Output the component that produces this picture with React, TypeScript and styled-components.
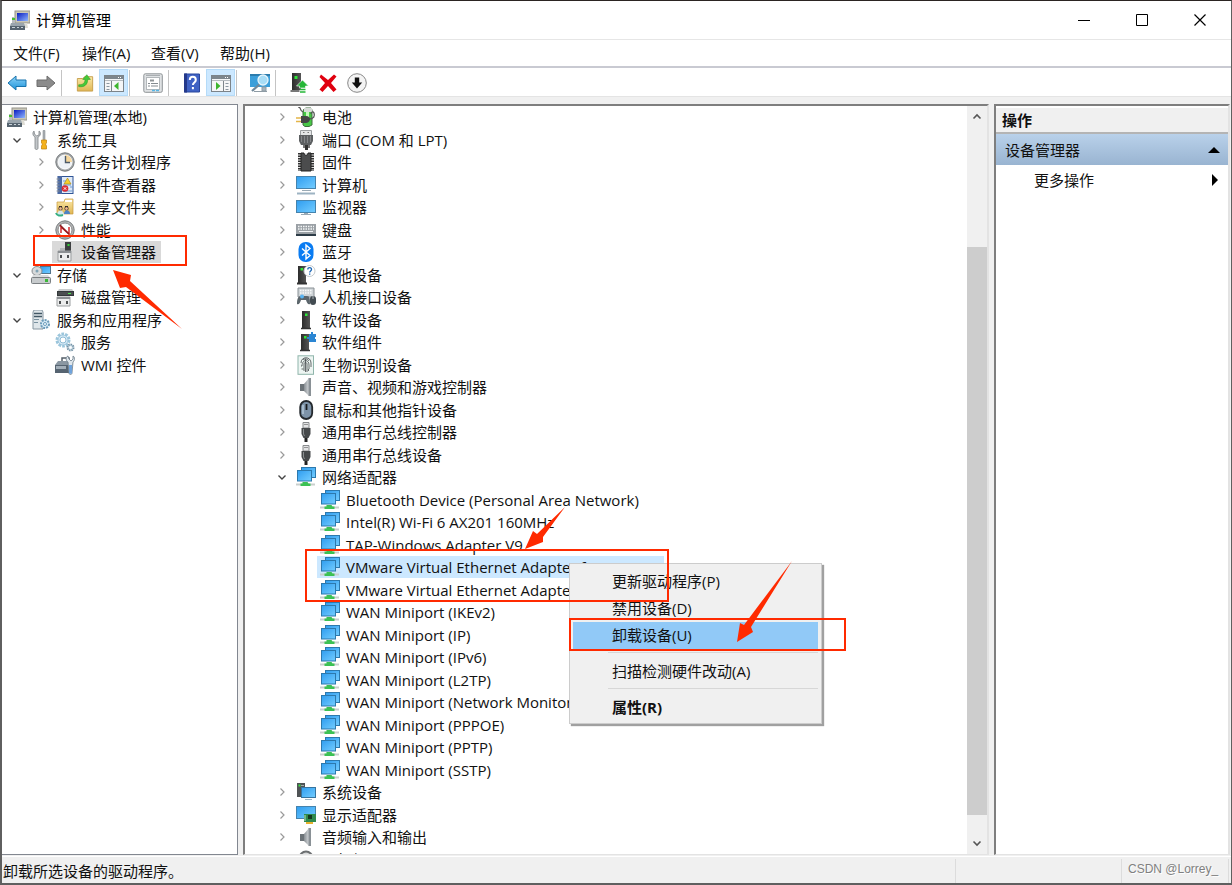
import React from 'react';
import styled, { createGlobalStyle, css } from 'styled-components';

const GlobalStyle = createGlobalStyle`
  * { box-sizing: border-box; }
  body {
    margin: 0;
    background: #f0f0f0;
    color: #111;
    font-family: "Open Sans", "Noto Sans CJK SC", sans-serif;
    font-size: 15px;
    line-height: 22px;
  }
  ul { list-style: none; margin: 0; padding: 0; }
  button { font: inherit; color: inherit; background: none; border: 0; padding: 0; margin: 0; }
  svg { display: block; flex: none; }
`;

/* ---------- icons ---------- */

const Defs = styled.svg`
  position: absolute;
`;

function Gradients() {
  return (
    <Defs width="0" height="0" aria-hidden="true">
      <linearGradient id="screen" x1="0" y1="0" x2="1" y2="1">
        <stop offset="0" stopColor="#2f9df0" />
        <stop offset="1" stopColor="#74cdff" />
      </linearGradient>
      <linearGradient id="steel" x1="0" y1="0" x2="1" y2="0">
        <stop offset="0" stopColor="#868c91" />
        <stop offset="1" stopColor="#d5d9dc" />
      </linearGradient>
      <linearGradient id="navy" x1="0" y1="0" x2="1" y2="1">
        <stop offset="0" stopColor="#0a1cc0" />
        <stop offset="1" stopColor="#8fb6ff" />
      </linearGradient>
      <linearGradient id="tower" x1="0" y1="0" x2="1" y2="0">
        <stop offset="0" stopColor="#2c2c2c" />
        <stop offset="1" stopColor="#555" />
      </linearGradient>
      <linearGradient id="folder" x1="0" y1="0" x2="0" y2="1">
        <stop offset="0" stopColor="#fbe9a8" />
        <stop offset="1" stopColor="#e0b653" />
      </linearGradient>
      <linearGradient id="sky" x1="0" y1="0" x2="0" y2="1">
        <stop offset="0" stopColor="#8fd4f8" />
        <stop offset="1" stopColor="#1c93da" />
      </linearGradient>
    </Defs>
  );
}

const shapes: Record<string, React.ReactNode> = {
  management: (
    <>
      <rect x="5" y="1" width="15" height="12" fill="#c9c7b8" stroke="#96948a" />
      <rect x="7" y="3" width="11" height="8" fill="url(#navy)" />
      <path d="M2 7h3v6H2z" fill="#b9bcc0" />
      <rect x="2" y="8" width="3" height="2" fill="#46c02e" />
      <path d="M8 13h9l1 5H8z" fill="#dddcd4" />
      <path d="M1 13h13l1 3H0z" fill="#9aa5ad" />
      <rect x="0" y="16" width="15" height="4" fill="#566470" />
      <path d="M2 17.500h3m2 0h2m2 0h2" stroke="#c9d2d8" />
    </>
  ),
  tools: (
    <>
      <path d="M3 1C1 3 2 6 4 7v11c0 2 3 2 3 0V7c3-1 3-5 1-6v4L5.500 6 3.500 4z" fill="#c3c7ca" stroke="#7d8387" strokeWidth=".8" />
      <path d="M12 0.500h2v10h-2z" fill="#aeb3b7" stroke="#777c80" strokeWidth=".5" />
      <path d="M10.500 10h5v3l-1 1 1 2v3h-5v-3l1-2-1-1z" fill="#f5b21c" stroke="#bd7f0c" strokeWidth=".7" />
    </>
  ),
  clock: (
    <>
      <circle cx="10" cy="10" r="9.200" fill="#a5a9ab" stroke="#74787a" />
      <circle cx="10" cy="10" r="7" fill="#eef2f6" stroke="#fff" />
      <path d="M10 10V3a7 7 0 0 1 7 7z" fill="#f6d79c" />
      <path d="M10.500 4v6.500H15" stroke="#4c5a68" strokeWidth="1.400" fill="none" />
    </>
  ),
  events: (
    <>
      <rect x="3" y="1.500" width="15" height="17" fill="#dfeaf7" stroke="#2f5597" />
      <rect x="3" y="1" width="4" height="18" fill="#4a69a3" />
      <path d="M1.500 4h3m-3 3h3m-3 3h3m-3 3h3m-3 3h3" stroke="#8a8f96" />
      <path d="M8 6h3m-3 4h8M8 16h9M15 12h3" stroke="#6e9ad4" />
      <path d="M12.500 3l3.500 6H9z" fill="#f6cf2d" stroke="#a98513" strokeWidth=".6" />
      <circle cx="10" cy="13.500" r="3.300" fill="#dc2b32" />
      <path d="M8.800 12.300l2.400 2.400m0-2.400l-2.400 2.400" stroke="#fff" />
    </>
  ),
  shared: (
    <>
      <path d="M2 5h7l1-3h8v15H2z" fill="url(#folder)" stroke="#c79a3c" strokeWidth=".7" />
      <path d="M10 3h7v2h-7z" fill="#fff" />
      <path d="M4 9h3v2H4zm6 0h3v2h-3z" fill="#2f2a28" />
      <circle cx="5.500" cy="11.500" r="1.800" fill="#f0b98e" stroke="#2f2a28" strokeWidth=".7" />
      <circle cx="11.500" cy="11.500" r="1.800" fill="#f0b98e" stroke="#2f2a28" strokeWidth=".7" />
      <path d="M2 18c0-6 7-6 7 0z" fill="#d5e9ee" />
      <path d="M9 17c0-5 6-5 6 0z" fill="#4e83c4" />
      <path d="M1 16c1 3 4 3 7 2" stroke="#35b084" strokeWidth="2" fill="none" />
    </>
  ),
  perf: (
    <>
      <circle cx="10" cy="10" r="9.200" fill="#b3b5b6" stroke="#74787a" />
      <circle cx="10" cy="10" r="7" fill="#fff" stroke="#8a8a8a" />
      <path d="M6 13V7l8 7V7" stroke="#d3272b" strokeWidth="1.500" fill="none" />
      <path d="M5 5l9 9" stroke="#8c1c1f" strokeWidth="1.500" />
    </>
  ),
  devmgr: (
    <>
      <rect x="10" y="0" width="6" height="9" fill="#3d3f40" />
      <rect x="12.500" y="2" width="2" height="2" fill="#37d63a" />
      <path d="M5 6h5v3H5z" fill="#b5b8ba" />
      <path d="M3 9h13v10H3z" fill="#eceded" stroke="#9c9fa1" />
      <path d="M3 9h13v2H3z" fill="#8c9093" />
      <path d="M5 13h2v3H5zm7 0h2v3h-2z" fill="#4c4f51" />
    </>
  ),
  storage: (
    <>
      <rect x="9.500" y="1.500" width="10" height="7" fill="url(#screen)" stroke="#52748c" />
      <ellipse cx="6" cy="6" rx="5" ry="4.500" fill="#d7dadb" stroke="#878c8f" />
      <circle cx="6" cy="6" r="1.500" fill="#7fa3b5" />
      <path d="M2 10h15l3 4H0z" fill="#d9dcdd" />
      <rect x=".5" y="12.500" width="19" height="6" rx="1" fill="#c7cbcd" stroke="#7b8083" />
      <rect x="14" y="14" width="3" height="3" fill="#3bb738" />
    </>
  ),
  diskmgr: (
    <>
      <path d="M4 2h13l2 3H2z" fill="#c9cccd" />
      <rect x="2.500" y="4.500" width="16" height="4" fill="#4b4e50" stroke="#33383a" />
      <rect x="13" y="6" width="3" height="1" fill="#4bea4b" />
      <path d="M2 10h13v9H2z" fill="#eceded" stroke="#9c9fa1" />
      <path d="M2 10h13v2H2z" fill="#8c9093" />
      <path d="M4 14h2v3H4zm7 0h2v3h-2z" fill="#4c4f51" />
    </>
  ),
  server: (
    <>
      <path d="M3 0h8l1 2v17H2V2z" fill="#dfe6ea" stroke="#8796a1" />
      <path d="M3 3.500h8M3 6.500h8" stroke="#425765" strokeWidth="1.500" />
      <path d="M3 9.500h5m-5 3h4" stroke="#78909e" />
      <circle cx="14" cy="14" r="4" fill="#d8ecf8" stroke="#6c9cba" strokeWidth="2" strokeDasharray="2 1" />
      <circle cx="14" cy="14" r="1.500" fill="#fff" stroke="#6c9cba" />
    </>
  ),
  gears: (
    <>
      <circle cx="8" cy="8" r="5.500" fill="#e4f1f8" stroke="#9cc6dc" strokeWidth="4" strokeDasharray="2.400 1" />
      <circle cx="8" cy="8" r="5" fill="#d6eaf6" stroke="#8fbcd5" strokeWidth=".7" />
      <circle cx="8" cy="8" r="3" fill="#fff" stroke="#8fbcd5" />
      <circle cx="15.500" cy="15.500" r="3" fill="#cfe0ea" stroke="#7895a8" strokeWidth="2" strokeDasharray="1.500 .8" />
      <circle cx="15.500" cy="15.500" r="1.200" fill="#fff" />
    </>
  ),
  wmi: (
    <>
      <path d="M7 6V3h7v3" stroke="#55606a" strokeWidth="1.500" fill="none" />
      <path d="M3 6h14l1 4H0z" fill="#8a97a2" />
      <path d="M0 10h17v8H0z" fill="#566471" />
      <path d="M1 11h10v3H1z" fill="#a3afb9" />
      <path d="M13 1c-3 1-2 5 0 6l1 11c0 2 3 2 3 0l1-11c2-2 2-5 0-6v3l-2 2-2-2z" fill="#dde5eb" stroke="#6b7b88" strokeWidth=".8" />
      <path d="M14 10h3v8c0 1-3 1-3 0z" fill="#6fa3dc" />
    </>
  ),
  battery: (
    <>
      <path d="M8 2l2-1h5l1 2v15l-3 1.500H9L7 18V4z" fill="#48c846" stroke="#3f6f3e" />
      <path d="M8 1h8v4H8z" fill="#d9dcd9" />
      <path d="M10 5h3v6h-3z" fill="#c4fbb9" />
      <path d="M2 0c4 0 1 4 5 5" stroke="#555" strokeWidth="1.200" fill="none" />
      <path d="M13 12c5 0 6-3 5-6-1-2-3-1-3 1" stroke="#555" strokeWidth="1.300" fill="none" />
      <path d="M5 9h5c3 0 4 2 4 3s-1 4-4 4H5z" fill="#454646" />
      <path d="M0 11h5M0 14.500h5" stroke="#e4b548" strokeWidth="1.500" />
    </>
  ),
  port: (
    <>
      <path d="M4.500 .5h11V6h-11z" fill="#e4e6e7" stroke="#9a9ea0" />
      <path d="M7 2.500h1.500m3 0H13" stroke="#777" />
      <path d="M3 5h14v6l-2 4H5l-2-4z" fill="#5d6062" />
      <path d="M5.500 6v6m3-6v7m3-7v7m3-7v6" stroke="#8e9193" strokeWidth=".8" />
      <path d="M7 15h2v3H7zm5 0h2v3h-2z" fill="#777" />
      <path d="M9 15h3v5H9z" fill="#333" />
    </>
  ),
  chip: (
    <>
      <rect x="2" y="1" width="16" height="18" fill="#e4e4e4" />
      <path d="M3.500 1v18M16.500 1v18" stroke="#333" strokeWidth="3" strokeDasharray="1.500 1" />
      <path d="M5 1h3c0 3 4 3 4 0h3v18H5z" fill="#4b4c4d" stroke="#232323" />
    </>
  ),
  computer: (
    <>
      <rect x=".5" y="1.500" width="19" height="12" fill="url(#screen)" stroke="#4583ad" />
      <path d="M6 15.500h9" stroke="#9aaab5" />
      <path d="M1 18.500h18" stroke="#9db3c2" strokeWidth="2" />
    </>
  ),
  monitor: (
    <>
      <rect x=".5" y="3.500" width="19" height="12" fill="url(#screen)" stroke="#4583ad" />
      <path d="M8 16h4v1H8z" fill="#9aaab5" />
      <path d="M5 17.500h10" stroke="#9aaab5" />
    </>
  ),
  keyboard: (
    <>
      <path d="M0 4h20v10H0z" fill="#9ba1a6" />
      <path d="M2 6.500h16M2 9h16" stroke="#f4f6f7" strokeDasharray="1.500 1" strokeWidth="1.500" />
      <path d="M3 11.500h14" stroke="#f4f6f7" />
      <path d="M0 14h20v2H0z" fill="#2d3c47" />
    </>
  ),
  bluetooth: (
    <>
      <rect x="2.500" y="0" width="15" height="20" rx="7" fill="#0a7cf2" />
      <path d="M6 6.500l8 7-4 3.500V3l4 3.500-8 7" stroke="#fff" strokeWidth="1.400" fill="none" />
    </>
  ),
  unknown: (
    <>
      <rect x="2" y="1" width="8" height="17" fill="url(#tower)" />
      <rect x="4.500" y="3" width="2.500" height="2.500" fill="#2ee63a" />
      <path d="M1 18.500h10" stroke="#333" strokeWidth="2" />
      <circle cx="13.500" cy="6" r="5.500" fill="#fff" stroke="#c3c9cd" />
      <path d="M11.800 4.500c0-2.500 3.700-2.500 3.700 0 0 1.500-1.800 1.500-1.800 3m0 1v1.300" stroke="#1b66b5" strokeWidth="1.300" fill="none" />
    </>
  ),
  hid: (
    <>
      <path d="M2 1h16v9H2z" fill="#cfd4d7" stroke="#8a9196" />
      <path d="M4 3.500h12M4 6h12" stroke="#f7f9fa" strokeWidth="1.500" strokeDasharray="1.500 1" />
      <path d="M1 17c0-5 1-8 4-8h6c3 0 3 3 3 8-2 1-3-1-4-4H5c-1 3-2 5-4 4z" fill="#5b656b" />
      <circle cx="6" cy="9.500" r="2" fill="#58b4f2" />
      <rect x="14" y="9" width="6" height="9" rx="3" fill="#424b51" />
      <path d="M17 9v3" stroke="#aab3b8" />
    </>
  ),
  tower: (
    <>
      <rect x="6" y="1" width="8" height="17" fill="url(#tower)" />
      <rect x="9" y="3.500" width="2.500" height="2.500" fill="#2ee63a" />
      <path d="M5 18.500h10" stroke="#333" strokeWidth="1.500" />
    </>
  ),
  component: (
    <>
      <rect x="5" y="2" width="8" height="16" fill="url(#tower)" />
      <rect x="8" y="4" width="2.500" height="2.500" fill="#2ee63a" />
      <path d="M4 18.500h10" stroke="#333" strokeWidth="1.500" />
      <path d="M13 2h2V0h2v2h3v3h-1v2h1v3h-7V7h-2V5h2z" fill="#2b86d3" />
    </>
  ),
  finger: (
    <>
      <rect x="2" y=".8" width="15.500" height="18.500" fill="#edf5f2" stroke="#8fb5ab" />
      <path d="M5 8c0-7 10-7 10 0v4M7 5c2-2 5-1 6 1M5 11h1c0-7 7-7 7-1v4M8 16V9c0-2 3-2 3 0v8M5.500 14h2M12.500 16v-2M9.500 4v13" stroke="#42484a" strokeWidth=".8" fill="none" />
    </>
  ),
  speaker: (
    <>
      <path d="M4 7h4v7H4z" fill="#6b7277" />
      <path d="M8 7l5-6v18l-5-5z" fill="url(#steel)" />
      <path d="M12.500 1h2.500v18h-2.500z" fill="#8a9196" />
    </>
  ),
  mouse: (
    <>
      <rect x="4.200" y="1" width="12" height="18" rx="6" fill="#7d93a8" stroke="#24292d" strokeWidth="1.800" />
      <path d="M7 5v9" stroke="#b5c9d9" strokeWidth="1.500" />
      <path d="M10.500 4v6" stroke="#17191b" strokeWidth="1.800" />
    </>
  ),
  usb: (
    <>
      <path d="M7 .5h6V6H7z" fill="#e3e4e5" stroke="#888b8d" />
      <path d="M8.500 2.500h1m1 0h1" stroke="#444" />
      <path d="M5.500 6h9v6l-2 4h-5l-2-4z" fill="#46494b" />
      <path d="M7.500 7v5l1 2" stroke="#8b8f91" fill="none" />
      <path d="M8.500 16h3v4h-3z" fill="#222" />
    </>
  ),
  network: (
    <>
      <rect x="5.500" y=".5" width="14" height="10" fill="url(#screen)" stroke="#2d79ad" />
      <rect x="1.500" y="3.500" width="14" height="10.500" fill="url(#screen)" stroke="#2d79ad" />
      <path d="M0 17.500h19" stroke="#c9cfcd" strokeWidth="2" />
      <path d="M6.500 15h5l1 1.500h2v2.500h-10v-2.500h2z" fill="#3cc154" />
    </>
  ),
  system: (
    <>
      <rect x="1" y="1" width="8" height="14" fill="#4f5355" />
      <rect x="2.500" y="2.500" width="2" height="2" fill="#39df42" />
      <path d="M5 3.500h3M5 6h3" stroke="#a4a9ab" />
      <rect x="5.500" y="5.500" width="14" height="10" fill="url(#screen)" stroke="#36749f" />
      <path d="M9 17.500h7" stroke="#9db3c2" />
    </>
  ),
  display: (
    <>
      <rect x=".5" y="1.500" width="19" height="12" fill="url(#screen)" stroke="#4583ad" />
      <rect x="8" y="9" width="12" height="8" fill="#2f8a4e" />
      <rect x="12" y="10" width="4" height="4" fill="#15371f" />
      <path d="M9 10v6" stroke="#b9dfc3" />
      <path d="M10 17h7v2h-7z" fill="#e6b12d" />
    </>
  ),
  camera: (
    <>
      <circle cx="10" cy="8" r="6.500" fill="#d8dadb" stroke="#6b6e70" strokeWidth="2" />
      <circle cx="10" cy="8" r="3" fill="#333" />
    </>
  ),
  back: <path d="M1 10l8-7v4h10v6.500H9V17z" fill="url(#sky)" stroke="#1773ad" strokeLinejoin="round" />,
  forward: <path d="M19 10l-8-7v4H1v6.500h10V17z" fill="#8b8b8b" stroke="#6d6d6d" strokeLinejoin="round" />,
  folderUp: (
    <>
      <path d="M1.500 5h6l2-2h9v16h-17z" fill="url(#folder)" stroke="#c49c48" />
      <path d="M3 12c5 0 7-2 7-6H7.500L12 .8 16 6h-3c0 6-4 9-10 8z" fill="#44ca39" stroke="#2c9625" strokeWidth=".6" />
    </>
  ),
  paneLeft: (
    <>
      <rect x=".5" y="2.500" width="19" height="16" fill="#f5f6f7" stroke="#7c848a" />
      <path d="M1 3h18v3H1z" fill="#7d868d" />
      <path d="M14 4.500h4" stroke="#fff" strokeDasharray="1 1" />
      <path d="M1 7.500h18" stroke="#b5bbc0" />
      <path d="M7.500 8v10" stroke="#7c848a" />
      <path d="M2.500 10.500h3m-3 3h3m-3 3h3" stroke="#8a97a1" />
      <path d="M14.500 9v8l-4.500-4z" fill="#3db52e" />
    </>
  ),
  paneRight: (
    <>
      <rect x=".5" y="2.500" width="19" height="16" fill="#f5f6f7" stroke="#7c848a" />
      <path d="M1 3h18v3H1z" fill="#7d868d" />
      <path d="M14 4.500h4" stroke="#fff" strokeDasharray="1 1" />
      <path d="M1 7.500h18" stroke="#b5bbc0" />
      <path d="M12.500 8v10" stroke="#7c848a" />
      <path d="M14.500 10.500h3m-3 3h3m-3 3h3" stroke="#8a97a1" />
      <path d="M5 9v8l4.500-4z" fill="#3db52e" />
    </>
  ),
  properties: (
    <>
      <rect x=".8" y=".8" width="18.500" height="18.500" rx="1.500" fill="#dfe2e4" stroke="#8f9497" />
      <path d="M3 2.500h14" stroke="#a9aeb1" />
      <rect x="3.500" y="4.500" width="13" height="12" fill="#fff" stroke="#b2b7ba" />
      <path d="M7 7.500h4" stroke="#8f9497" strokeWidth="2" />
      <path d="M5 10.500h2m1 0h7M5 13h2m1 0h7" stroke="#848b90" />
      <path d="M9 17.500h3m1 0h3" stroke="#57b6e6" strokeWidth="1.500" />
    </>
  ),
  help: (
    <>
      <path d="M2.500 1h15v18h-15z" fill="#3f62c4" stroke="#29469c" />
      <path d="M2 .5h3v19H2z" fill="#24398a" />
      <path d="M7.800 7c0-4.200 6-4.200 6 0 0 2.600-2.900 2.400-2.900 5m0 2v2.200" stroke="#fff" strokeWidth="2" fill="none" />
    </>
  ),
  scan: (
    <>
      <rect x="0" y="1" width="20" height="13" fill="#3c9fda" />
      <path d="M0 1h20v2H0z" fill="#2c7cad" />
      <path d="M4 18.500h13M12 14h4v4h-4z" stroke="#8f9ca5" fill="#a9b5bd" />
      <path d="M10 11l-8 7" stroke="#72899a" strokeWidth="2.200" />
      <circle cx="13" cy="7" r="5" fill="#a9ddf6" stroke="#e6f5fc" strokeWidth="1.300" />
    </>
  ),
  update: (
    <>
      <rect x="3" y="0" width="9" height="17" fill="url(#tower)" />
      <rect x="5.500" y="3" width="3" height="3" fill="#2ee63a" />
      <path d="M1.500 18h9" stroke="#777" strokeWidth="2" />
      <path d="M13.500 7l6 6h-3v2h-6v-2h-3z" fill="#25b637" stroke="#fff" strokeWidth=".6" />
      <path d="M11 16.500h5.500M11 19h5.500" stroke="#25b637" strokeWidth="1.600" />
    </>
  ),
  remove: <path d="M3 1.500l7 5.500 6-5.500 2.500 2-5.500 6.500 5.500 6.500-3 2.500-5.500-6-5.500 6-3-2.500 5.500-6.500-5.500-6z" fill="#e0000f" />,
  disable: (
    <>
      <circle cx="10" cy="10" r="9.300" fill="#f4f4f4" stroke="#868686" />
      <path d="M7.800 4.500h4.400v5h3L10 15.500 4.800 9.500h3z" fill="#111" />
    </>
  ),
};

function Icon({ name, size = 20 }: { name: string; size?: number }) {
  return (
    <svg width={size} height={size} viewBox="0 0 20 20" aria-hidden="true">
      {shapes[name]}
    </svg>
  );
}

function Arrow({ open }: { open?: boolean }) {
  return (
    <svg width="10" height="10" viewBox="0 0 10 10" fill="none" aria-hidden="true">
      {open ? (
        <path d="M1.500 3.500L5 7l3.500-3.500" stroke="#444" strokeWidth="1.400" />
      ) : (
        <path d="M3.500 1.500L7 5 3.500 8.500" stroke="#9a9a9a" strokeWidth="1.200" />
      )}
    </svg>
  );
}

/* ---------- window frame ---------- */

const Window = styled.div`
  position: relative;
  display: flex;
  flex-direction: column;
  height: 100vh;
  min-height: 480px;
  overflow: hidden;
  background: #f0f0f0;
  border: solid #5f5f5f;
  border-width: 1px 1px 2px 2px;
  border-top-color: #2b2422;
`;

const TitleBar = styled.header`
  display: flex;
  align-items: center;
  height: 39px;
  padding: 0 2px 0 8px;
  background: #fff;
  border-bottom: 1px solid #e6e6e6;
`;

const Title = styled.h1`
  flex: 1;
  margin: 0;
  padding: 0 0 1px 6px;
  font-size: 15px;
  font-weight: 400;
  color: #000;
`;

const CaptionButton = styled.button`
  display: grid;
  place-items: center;
  width: 58px;
  height: 38px;
`;

const MenuBar = styled.nav`
  display: flex;
  height: 28px;
  background: #fff;
  border-bottom: 2px solid #c9cad2;
`;

const MenuBarButton = styled.button`
  width: 69px;
  padding-left: 11px;
  text-align: left;
`;

const ToolBar = styled.div`
  display: flex;
  align-items: center;
  height: 29px;
  padding-top: 1px;
  background: #fff;
  border-bottom: 1px solid #e4e4e4;
`;

const ToolButton = styled.button<{ $pressed?: boolean }>`
  display: grid;
  place-items: center;
  width: 29px;
  height: 27px;
  padding-top: 1px;
  ${(p) => p.$pressed && css`
    background: #cce8ff;
    box-shadow: inset 0 0 0 1px #b5dbf8;
  `}
`;

const ToolDivider = styled.span`
  width: 1px;
  height: 26px;
  margin: 0 8px 0 1px;
  background: #c4c4c4;
`;

/* ---------- panes ---------- */

const Panes = styled.main`
  flex: 1;
  min-height: 0;
  display: grid;
  grid-template-columns: 236px minmax(0, 1fr) 236px;
  gap: 5px;
  padding: 7px 1px 1px 0;
`;

const TreePane = styled.section`
  overflow: hidden;
  background: #fff;
  border: 1px solid #828790;
  border-left: 0;
  padding-top: 1px;
`;

const SunkenPane = styled.section`
  display: flex;
  min-width: 0;
  overflow: hidden;
  background: #fff;
  border: solid #e3e3e3;
  border-width: 2px 2px 1px 2px;
  border-top-color: #7e7e7e;
  border-left-color: #7e7e7e;
`;

const ActionPane = styled(SunkenPane)`
  flex-direction: column;
  padding-top: 2px;
`;

const Tree = styled.ul`
  flex: 1;
  min-width: 0;
`;

const Row = styled.li<{ $inset: number; $level: number }>`
  display: flex;
  align-items: center;
  height: 22px;
  padding-left: ${(p) => p.$inset + p.$level * 24}px;
  &:nth-child(even) { height: 23px; }
`;

const Toggle = styled.button`
  display: grid;
  place-items: center;
  width: 24px;
  height: 22px;
  padding-right: 4px;
`;

const Indent = styled.span`
  width: 24px;
`;

const Node = styled.button<{ $tone?: string }>`
  display: flex;
  align-items: center;
  gap: 6px;
  height: 100%;
  margin-left: -3px;
  padding: 0 5px 0 3px;
  white-space: nowrap;
  background: ${(p) => p.$tone ?? 'transparent'};
`;

const ScrollBar = styled.div`
  display: grid;
  grid-template-rows: 22px minmax(0, 119fr) minmax(0, 567fr) minmax(0, 17fr) 22px;
  width: 20px;
  background: #f0f0f0;
`;

const ScrollButton = styled.button`
  display: grid;
  place-items: center;
  &:last-child { grid-row: 5; }
`;

const ScrollThumb = styled.span`
  grid-row: 3;
  background: #cdcdcd;
`;

const ActionTitle = styled.h2`
  height: 26px;
  margin: 0;
  padding: 1px 6px;
  background: #f0f0f0;
  border-bottom: 2px solid #b4b4b4;
  font-size: 15px;
  font-weight: 700;
`;

const ActionGroup = styled.button`
  display: flex;
  align-items: center;
  justify-content: space-between;
  height: 31px;
  padding: 0 7px 0 9px;
  background: linear-gradient(#b9d1ea, #99b4d1);
`;

const ActionItem = styled.button`
  display: flex;
  align-items: center;
  justify-content: space-between;
  height: 30px;
  padding: 0 9px 0 38px;
`;

/* ---------- status bar ---------- */

const StatusBar = styled.footer`
  display: flex;
  height: 27px;
  padding: 2px 2px 0 0;
  border-top: 1px solid #fff;
`;

const StatusCell = styled.div<{ $width?: number }>`
  flex: ${(p) => (p.$width ? `0 0 ${p.$width}px` : '1')};
  padding: 1px 1px 0;
  border-right: 1px solid #dcdcdc;
`;

const Credit = styled.span`
  display: block;
  padding-left: 5px;
  font: 12px/18px "Liberation Sans", sans-serif;
  color: #808080;
  text-shadow: 1px 1px 0 #fff;
`;

/* ---------- context menu ---------- */

const ContextMenu = styled.div`
  position: absolute;
  left: 567px;
  top: 562px;
  width: 253px;
  padding: 4px 3px 2px;
  background: #f0f0f0;
  border: 1px solid #ccc;
  box-shadow: 2px 2px 1px #a0a0a0;
`;

const ContextItem = styled.button<{ $active?: boolean; $strong?: boolean }>`
  display: block;
  width: 100%;
  height: 27px;
  padding: 0 0 2px 39px;
  text-align: left;
  background: ${(p) => (p.$active ? '#91c9f7' : 'transparent')};
  font-weight: ${(p) => (p.$strong ? 700 : 400)};
`;

const ContextDivider = styled.hr`
  height: 1px;
  margin: 3px 0 5px 35px;
  border: 0;
  background: #d7d7d7;
`;

const Markup = styled.svg`
  position: absolute;
  left: -2px;
  top: -1px;
  pointer-events: none;
`;

/* ---------- data ---------- */

type Item = { text: string; icon: string; level: number; open?: boolean; leaf?: boolean; selected?: boolean };

const consoleTree: Item[] = [
  { text: '系统工具', icon: 'tools', level: 0, open: true },
  { text: '任务计划程序', icon: 'clock', level: 1 },
  { text: '事件查看器', icon: 'events', level: 1 },
  { text: '共享文件夹', icon: 'shared', level: 1 },
  { text: '性能', icon: 'perf', level: 1 },
  { text: '设备管理器', icon: 'devmgr', level: 1, leaf: true, selected: true },
  { text: '存储', icon: 'storage', level: 0, open: true },
  { text: '磁盘管理', icon: 'diskmgr', level: 1, leaf: true },
  { text: '服务和应用程序', icon: 'server', level: 0, open: true },
  { text: '服务', icon: 'gears', level: 1, leaf: true },
  { text: 'WMI 控件', icon: 'wmi', level: 1, leaf: true },
];

const adapters = [
  'Bluetooth Device (Personal Area Network)',
  'Intel(R) Wi-Fi 6 AX201 160MHz',
  'TAP-Windows Adapter V9',
  'VMware Virtual Ethernet Adapter for VMnet1',
  'VMware Virtual Ethernet Adapter for VMnet8',
  'WAN Miniport (IKEv2)',
  'WAN Miniport (IP)',
  'WAN Miniport (IPv6)',
  'WAN Miniport (L2TP)',
  'WAN Miniport (Network Monitor)',
  'WAN Miniport (PPPOE)',
  'WAN Miniport (PPTP)',
  'WAN Miniport (SSTP)',
];

const category = (text: string, icon: string, open = false): Item => ({ text, icon, level: 0, open });

const deviceTree: Item[] = [
  category('电池', 'battery'),
  category('端口 (COM 和 LPT)', 'port'),
  category('固件', 'chip'),
  category('计算机', 'computer'),
  category('监视器', 'monitor'),
  category('键盘', 'keyboard'),
  category('蓝牙', 'bluetooth'),
  category('其他设备', 'unknown'),
  category('人机接口设备', 'hid'),
  category('软件设备', 'tower'),
  category('软件组件', 'component'),
  category('生物识别设备', 'finger'),
  category('声音、视频和游戏控制器', 'speaker'),
  category('鼠标和其他指针设备', 'mouse'),
  category('通用串行总线控制器', 'usb'),
  category('通用串行总线设备', 'usb'),
  category('网络适配器', 'network', true),
  ...adapters.map((text, i) => ({ text, icon: 'network', level: 1, leaf: true, selected: i === 3 })),
  category('系统设备', 'system'),
  category('显示适配器', 'display'),
  category('音频输入和输出', 'speaker'),
  category('照相机', 'camera'),
];

const toolGroups: { icon: string; label: string; pressed?: boolean; size?: number }[][] = [
  [{ icon: 'back', label: '后退' }, { icon: 'forward', label: '前进' }],
  [{ icon: 'folderUp', label: '上移一级', size: 18 }, { icon: 'paneLeft', label: '显示控制台树', pressed: true }],
  [{ icon: 'properties', label: '属性' }],
  [{ icon: 'help', label: '帮助' }, { icon: 'paneRight', label: '显示操作窗格', pressed: true }],
  [{ icon: 'scan', label: '扫描检测硬件改动' }],
  [{ icon: 'update', label: '更新驱动程序' }, { icon: 'remove', label: '卸载设备' }, { icon: 'disable', label: '禁用设备' }],
];

function TreeRow({ item, inset, tone }: { item: Item; inset: number; tone: string }) {
  return (
    <Row $inset={inset} $level={item.level}>
      {item.leaf ? (
        <Indent />
      ) : (
        <Toggle aria-label={item.text} aria-expanded={!!item.open}>
          <Arrow open={item.open} />
        </Toggle>
      )}
      <Node $tone={item.selected ? tone : undefined}>
        <Icon name={item.icon} />
        {item.text}
      </Node>
    </Row>
  );
}

export default function App() {
  return (
    <Window>
      <GlobalStyle />
      <Gradients />
      <TitleBar>
        <Icon name="management" />
        <Title>计算机管理</Title>
        <CaptionButton aria-label="最小化">
          <svg width="12" height="12" viewBox="0 0 12 12"><path d="M0 6.500h12" stroke="#000" /></svg>
        </CaptionButton>
        <CaptionButton aria-label="最大化">
          <svg width="12" height="12" viewBox="0 0 12 12"><path d="M.5 .5h11v11H.5z" stroke="#000" fill="none" /></svg>
        </CaptionButton>
        <CaptionButton aria-label="关闭">
          <svg width="12" height="12" viewBox="0 0 12 12"><path d="M.5 .5l11 11m0-11l-11 11" stroke="#000" strokeWidth="1.200" /></svg>
        </CaptionButton>
      </TitleBar>
      <MenuBar>
        {['文件(F)', '操作(A)', '查看(V)', '帮助(H)'].map((text) => (
          <MenuBarButton key={text}>{text}</MenuBarButton>
        ))}
      </MenuBar>
      <ToolBar>
        {toolGroups.map((group, i) => (
          <React.Fragment key={i}>
            {i > 0 && <ToolDivider />}
            {group.map((tool) => (
              <ToolButton key={tool.icon} aria-label={tool.label} $pressed={tool.pressed}>
                <Icon name={tool.icon} size={tool.size} />
              </ToolButton>
            ))}
          </React.Fragment>
        ))}
      </ToolBar>
      <Panes>
        <TreePane>
          <Tree>
            <Row $inset={5} $level={0}>
              <Node>
                <Icon name="management" />
                计算机管理(本地)
              </Node>
            </Row>
            {consoleTree.map((item) => (
              <TreeRow key={item.text} item={item} inset={5} tone="#d9d9d9" />
            ))}
          </Tree>
        </TreePane>
        <SunkenPane>
          <Tree>
            {deviceTree.map((item) => (
              <TreeRow key={item.text} item={item} inset={27} tone="#cce8ff" />
            ))}
          </Tree>
          <ScrollBar>
            <ScrollButton aria-label="向上滚动">
              <svg width="10" height="10" viewBox="0 0 10 10"><path d="M1.500 6.500L5 3l3.500 3.500" stroke="#555" strokeWidth="1.600" fill="none" /></svg>
            </ScrollButton>
            <ScrollThumb />
            <ScrollButton aria-label="向下滚动">
              <svg width="10" height="10" viewBox="0 0 10 10"><path d="M1.500 3.500L5 7l3.500-3.500" stroke="#555" strokeWidth="1.600" fill="none" /></svg>
            </ScrollButton>
          </ScrollBar>
        </SunkenPane>
        <ActionPane>
          <ActionTitle>操作</ActionTitle>
          <ActionGroup>
            设备管理器
            <svg width="14" height="8" viewBox="0 0 14 8" aria-hidden="true"><path d="M7 1l6 6H1z" /></svg>
          </ActionGroup>
          <ActionItem>
            更多操作
            <svg width="8" height="14" viewBox="0 0 8 14" aria-hidden="true"><path d="M1 1l6 6-6 6z" /></svg>
          </ActionItem>
        </ActionPane>
      </Panes>
      <StatusBar>
        <StatusCell>卸载所选设备的驱动程序。</StatusCell>
        <StatusCell $width={166} />
        <StatusCell $width={107}>
          <Credit>CSDN @Lorrey_</Credit>
        </StatusCell>
      </StatusBar>

      <ContextMenu role="menu">
        <ContextItem role="menuitem">更新驱动程序(P)</ContextItem>
        <ContextItem role="menuitem">禁用设备(D)</ContextItem>
        <ContextItem role="menuitem" $active>卸载设备(U)</ContextItem>
        <ContextDivider />
        <ContextItem role="menuitem">扫描检测硬件改动(A)</ContextItem>
        <ContextDivider />
        <ContextItem role="menuitem" $strong>属性(R)</ContextItem>
      </ContextMenu>

      <Markup width="860" height="680" viewBox="0 0 860 680" aria-hidden="true">
        <g fill="none" stroke="#ff2a00" strokeWidth="2">
          <rect x="34" y="236" width="152" height="29" />
          <rect x="306" y="550" width="362" height="51" />
          <rect x="570" y="619" width="275" height="31" />
        </g>
        <g fill="#ff2a00">
          <path d="M113 270l18 5-1 6 52 48-56-42-6 1z" />
          <path d="M525 549l8-18 4 3 28-27-22 30v5z" />
          <path d="M737 642l3-19 4 2 48-64-41 66 2 5z" />
        </g>
      </Markup>
    </Window>
  );
}
